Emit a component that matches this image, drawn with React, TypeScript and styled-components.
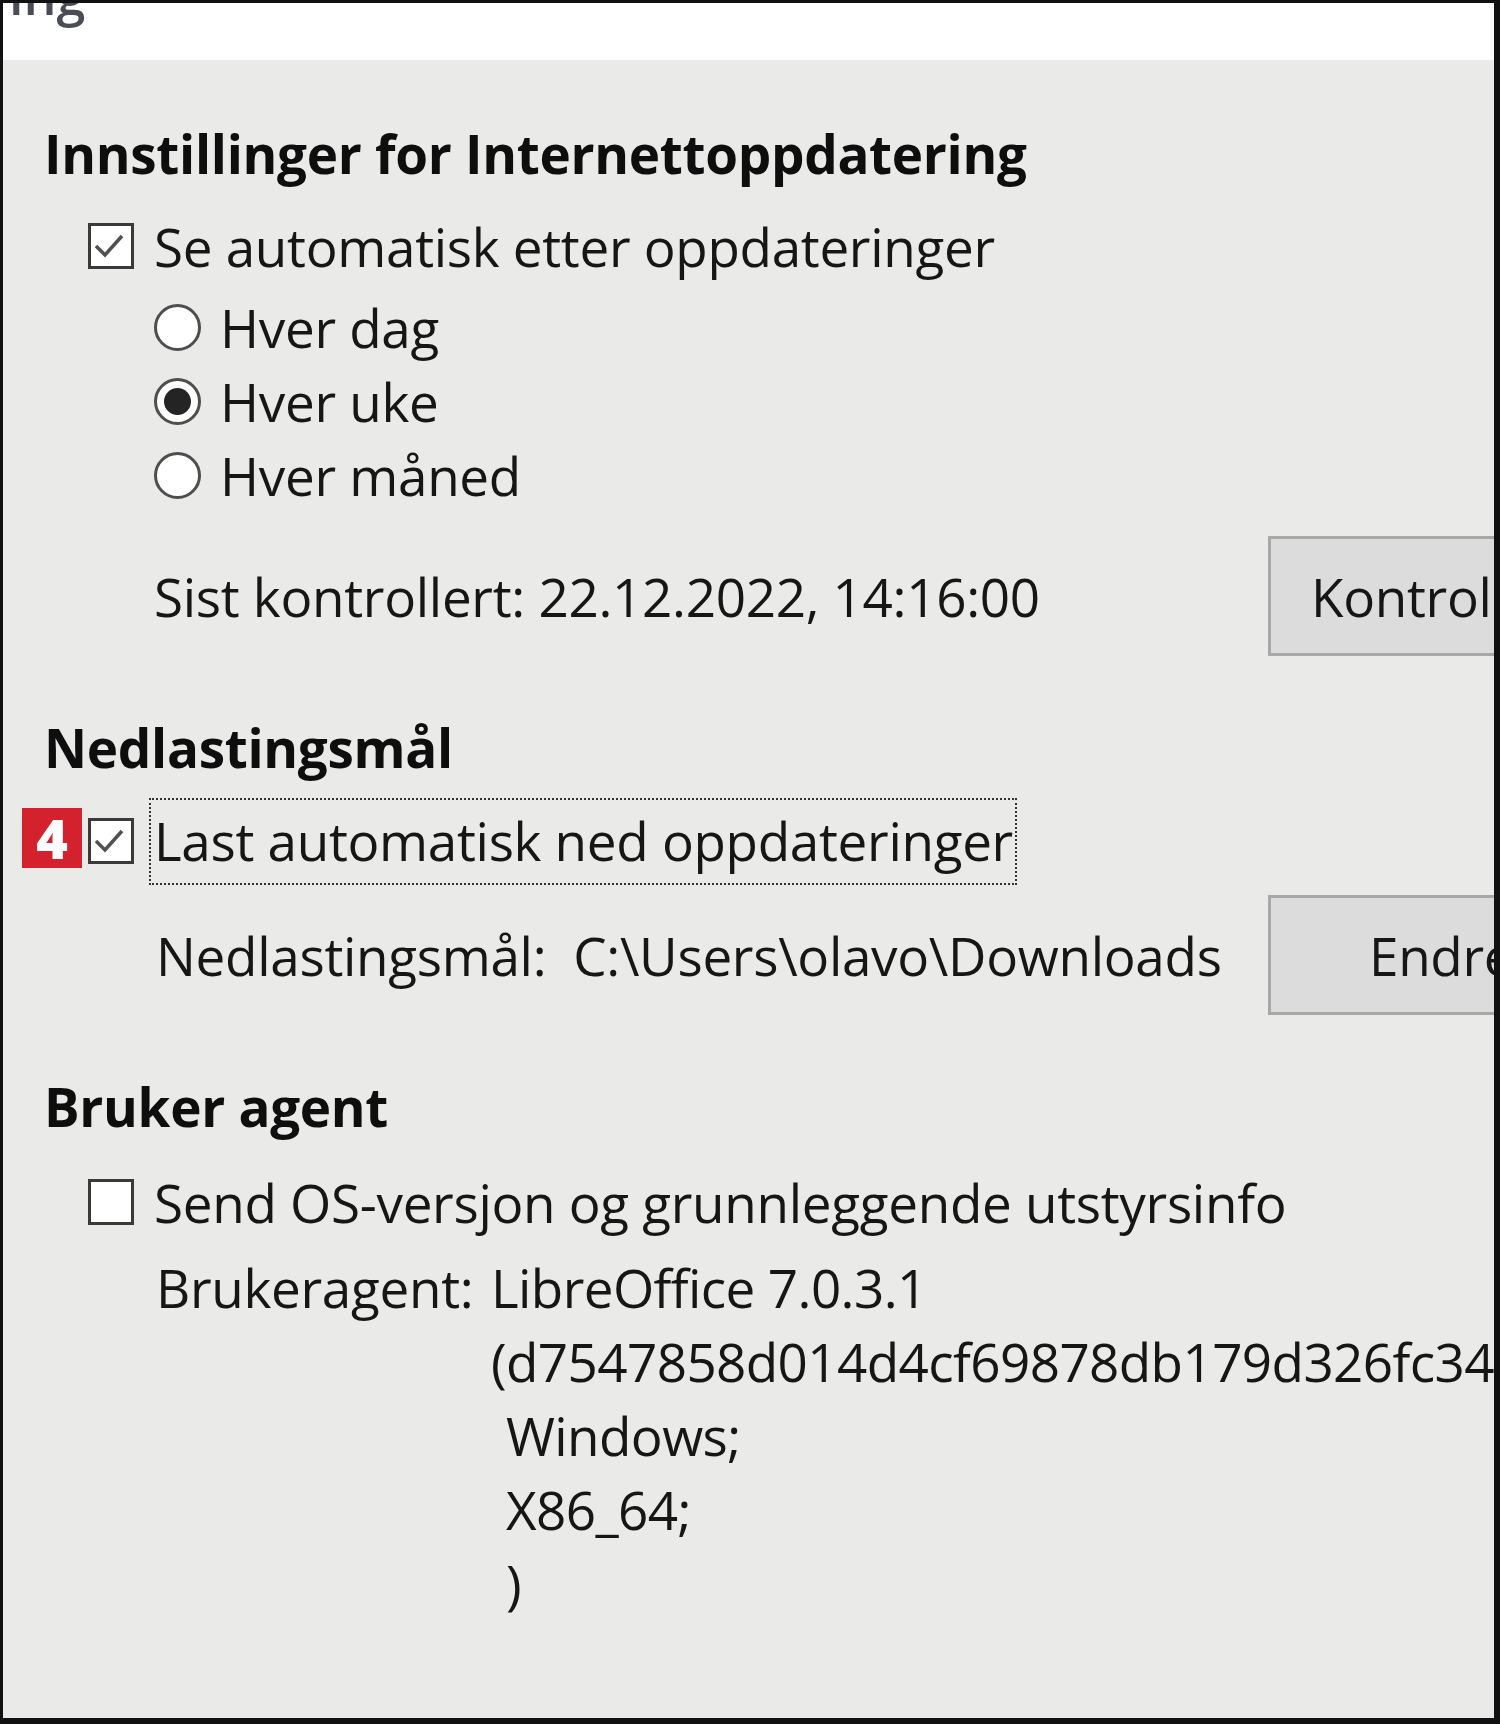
import React from "react";
import styled, { createGlobalStyle } from "styled-components";

const Global = createGlobalStyle`
  html, body { margin: 0; padding: 0; background: #0c0c0c; }
  body { font-family: "Open Sans", "Noto Sans", sans-serif; }
`;

const Frame = styled.div`
  width: 1500px;
  height: 1724px;
  box-sizing: border-box;
  border-style: solid;
  border-color: #111;
  border-width: 3px 6px 6px 3px;
  background: #eaeae8;
  display: flex;
  flex-direction: column;
  overflow: hidden;
`;

const Header = styled.div`
  height: 57px;
  background: #ffffff;
  overflow: hidden;
  padding-left: 6px;
  flex: none;
`;

const HeaderTitle = styled.div`
  font-size: 52px;
  line-height: 52px;
  margin-top: -34px;
  color: #4a4d57;
  font-weight: 600;
`;

const Panel = styled.div`
  position: relative;
  flex: 1;
  padding-left: 41px;
  display: flex;
  flex-direction: column;
  color: #161616;
  font-size: 53px;
  letter-spacing: -0.3px;
`;

const Heading = styled.div<{ $mt: number }>`
  margin-top: ${(p) => p.$mt}px;
  height: 70px;
  display: flex;
  align-items: center;
  font-weight: 700;
  font-size: 53px;
  letter-spacing: -0.3px;
  color: #0e0e0e;
`;

const CheckRow = styled.div<{ $mt: number }>`
  position: relative;
  margin-top: ${(p) => p.$mt}px;
  margin-left: 44px;
  height: 70px;
  display: flex;
  align-items: center;
  gap: 20px;
`;

const Box = styled.span`
  width: 46px;
  height: 46px;
  box-sizing: border-box;
  border: 3px solid #3a3a3a;
  background: #fff;
  display: flex;
  align-items: center;
  justify-content: center;
  flex: none;
`;

const RadioRow = styled.div`
  margin-left: 110px;
  height: 74px;
  display: flex;
  align-items: center;
  gap: 19px;
`;

const RadioCircle = styled.span<{ $on?: boolean }>`
  width: 47px;
  height: 47px;
  box-sizing: border-box;
  border-radius: 50%;
  border: 3px solid #4e4e4e;
  background: #fff;
  display: flex;
  align-items: center;
  justify-content: center;
  flex: none;
  &::after {
    content: "";
    display: ${(p) => (p.$on ? "block" : "none")};
    width: 27px;
    height: 27px;
    border-radius: 50%;
    background: #242424;
  }
`;

const ButtonRow = styled.div<{ $mt: number }>`
  margin-top: ${(p) => p.$mt}px;
  margin-left: 110px;
  height: 120px;
  display: grid;
  grid-template-columns: 1114px 340px;
  align-items: center;
`;

const Label = styled.span<{ $indent?: number }>`
  white-space: nowrap;
  padding-left: ${(p) => p.$indent ?? 0}px;
`;

const Button = styled.div`
  height: 120px;
  box-sizing: border-box;
  border: 3px solid #a8a8a8;
  background: #dcdcdc;
  display: flex;
  align-items: center;
  white-space: nowrap;
`;

const ButtonText = styled.span<{ $pad: number }>`
  padding-left: ${(p) => p.$pad}px;
`;

const Focus = styled.span`
  outline: 2px dotted #333;
  outline-offset: 0;
  padding: 4px 2px 6px 3px;
  margin-left: -3px;
  white-space: nowrap;
`;

const Badge = styled.span`
  position: absolute;
  left: -66px;
  top: 2px;
  width: 60px;
  height: 60px;
  background: #d3212d;
  color: #fff;
  font-weight: 800;
  font-size: 54px;
  letter-spacing: 0;
  display: flex;
  align-items: center;
  justify-content: center;
`;

const AgentBlock = styled.div<{ $mt: number }>`
  margin-top: ${(p) => p.$mt}px;
  margin-left: 112px;
  display: grid;
  grid-template-columns: 335px auto;
  grid-auto-rows: 74px;
  align-items: center;
  white-space: nowrap;
`;

const AgentValue = styled.span<{ $indent?: number }>`
  grid-column: 2;
  padding-left: ${(p) => p.$indent ?? 0}px;
  letter-spacing: -0.6px;
`;

const Check = () => (
  <svg width="40" height="40" viewBox="0 0 40 40">
    <path d="M5 20 L14 29 L31 10" fill="none" stroke="#505050" strokeWidth="3.5" />
  </svg>
);

export default function App() {
  return (
    <>
      <Global />
      <Frame>
        <Header>
          <HeaderTitle>ing</HeaderTitle>
        </Header>
        <Panel>
          <Heading $mt={58}>Innstillinger for Internettoppdatering</Heading>
          <CheckRow $mt={23}>
            <Box>
              <Check />
            </Box>
            <Label>Se automatisk etter oppdateringer</Label>
          </CheckRow>
          <div style={{ marginTop: 9 }} />
          <RadioRow>
            <RadioCircle />
            <Label>Hver dag</Label>
          </RadioRow>
          <RadioRow>
            <RadioCircle $on />
            <Label>Hver uke</Label>
          </RadioRow>
          <RadioRow>
            <RadioCircle />
            <Label>Hver måned</Label>
          </RadioRow>
          <ButtonRow $mt={24}>
            <Label>Sist kontrollert: 22.12.2022, 14:16:00</Label>
            <Button>
              <ButtonText $pad={40}>Kontroller nå</ButtonText>
            </Button>
          </ButtonRow>
          <Heading $mt={56}>Nedlastingsmål</Heading>
          <CheckRow $mt={24}>
            <Badge>4</Badge>
            <Box>
              <Check />
            </Box>
            <Focus>Last automatisk ned oppdateringer</Focus>
          </CheckRow>
          <ButtonRow $mt={19}>
            <Label $indent={2}>Nedlastingsmål:&nbsp; C:\Users\olavo\Downloads</Label>
            <Button>
              <ButtonText $pad={98}>Endre...</ButtonText>
            </Button>
          </ButtonRow>
          <Heading $mt={56}>Bruker agent</Heading>
          <CheckRow $mt={26}>
            <Box />
            <Label>Send OS-versjon og grunnleggende utstyrsinfo</Label>
          </CheckRow>
          <AgentBlock $mt={13}>
            <span>Brukeragent:</span>
            <AgentValue>LibreOffice 7.0.3.1</AgentValue>
            <AgentValue>(d7547858d014d4cf69878db179d326fc3483e082)</AgentValue>
            <AgentValue $indent={15}>Windows;</AgentValue>
            <AgentValue $indent={15}>X86_64;</AgentValue>
            <AgentValue $indent={15}>)</AgentValue>
          </AgentBlock>
        </Panel>
      </Frame>
    </>
  );
}
